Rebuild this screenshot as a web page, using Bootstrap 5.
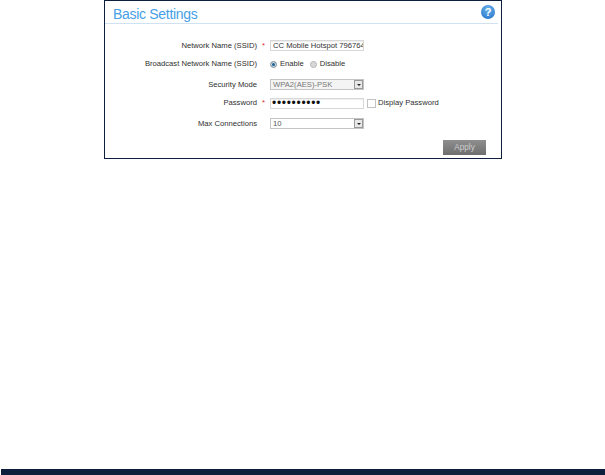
<!DOCTYPE html>
<html lang="en">
<head>
<meta charset="utf-8">
<title>Basic Settings</title>
<link rel="stylesheet" href="https://cdn.jsdelivr.net/npm/bootstrap@5.3.0/dist/css/bootstrap.min.css">
<style>
html,body{height:100%}
body{font-family:"Liberation Sans",Arial,sans-serif;font-size:7.65px;color:#2f2f2f;background:#fff;overflow:hidden}
.screen{height:475px}
.panel{margin-left:104px;width:398px;height:159px;border:1px solid #0d1f3c;border-radius:0;padding:0 3px 0 0;position:relative}
.panel-head{height:23px;padding-left:8px;border-bottom:1px solid #cfe2f1;padding-right:4px}
.panel-title{font-size:14px;letter-spacing:-.3px;line-height:1;color:#45a0e6;font-weight:400;margin:0;padding-top:6px}
.help-dot{width:14px;height:14px;border-radius:50%;background:radial-gradient(circle at 50% 30%,#6db3ee,#1f6fc4);color:#fff;font-size:11px;font-weight:700;line-height:14px;text-align:center;margin-top:4px;margin-right:-1px}
.form-grid{padding-top:11px}
.form-line{height:18px;display:flex;align-items:center}
.line-gap{height:21px}
.line-short{height:18px;padding-bottom:2px}
.line-up{padding-bottom:2px}
.line-tall{height:20px;padding-top:1px}
.field-label{width:152px;text-align:right;flex:none}
.req{display:inline-block;width:13px;color:#d9232e;text-align:left;padding-left:5px;flex:none}
.field-box{width:94px;height:11px;border:1px solid #d8d8d8;background:#fff;padding:0 0 0 2px;font:7.65px/9px "Liberation Sans",Arial,sans-serif;color:#333;flex:none;outline:0;box-shadow:inset 0 1px 1px #eee}
.drop-box{position:relative;display:flex;align-items:center;height:11px;width:94px;border:1px solid #c4c4c4;padding-left:2px;flex:none;background:#fff;color:#555}
.drop-grey{background:#f4f4f4;color:#777}
.drop-arrow{position:absolute;right:0;top:0;width:9px;height:9px;background:#e8e8e8;border:1px solid #999;display:flex;align-items:center;justify-content:center}
.drop-arrow::after{content:"";border-left:2px solid transparent;border-right:2px solid transparent;border-top:2px solid #222}
.radio-dot{width:7px;height:7px;border-radius:50%;background:#d8d8d8;border:1px solid #b5b5b5;flex:none;margin-right:3px}
.radio-on{background:#1f5f95;border-color:#a5a5a5;box-shadow:inset 0 0 0 1px #cfdfe9}
.tick-box{width:9px;height:9px;border:1px solid #c2c2c2;background:#fff;margin:0 2px 0 3px;flex:none}
.dots{letter-spacing:.7px;font-size:12px;line-height:9px;color:#111;padding-left:1px}
.apply-btn{position:absolute;right:15px;bottom:3px;width:43px;height:15px;border:0;border-radius:0;background:linear-gradient(#8f8f8f,#6e6e6e);color:#cfcfcf;font-size:8.2px;padding:0;line-height:15px}
.foot-strip{position:absolute;left:1px;right:0;bottom:0;height:6px;background:#0d1f3c}
.enable-txt{margin-right:6px}
</style>
</head>
<body>
<div class="screen position-relative">
  <section class="panel">
    <div class="panel-head d-flex justify-content-between align-items-start">
      <h1 class="panel-title">Basic Settings</h1>
      <div class="help-dot">?</div>
    </div>
    <form class="form-grid">
      <div class="form-line line-gap">
        <span class="field-label">Network Name (SSID)</span><span class="req">*</span>
        <input class="field-box" value="CC Mobile Hotspot 796764" readonly>
      </div>
      <div class="form-line line-up">
        <span class="field-label">Broadcast Network Name (SSID)</span><span class="req"></span>
        <span class="radio-dot radio-on"></span><span class="enable-txt">Enable</span>
        <span class="radio-dot"></span><span>Disable</span>
      </div>
      <div class="form-line line-gap">
        <span class="field-label">Security Mode</span><span class="req"></span>
        <div class="drop-box drop-grey">WPA2(AES)-PSK<span class="drop-arrow"></span></div>
      </div>
      <div class="form-line line-short">
        <span class="field-label">Password</span><span class="req">*</span>
        <div class="field-box dots d-flex align-items-center">••••••••••</div>
        <span class="tick-box"></span><span>Display Password</span>
      </div>
      <div class="form-line line-tall">
        <span class="field-label">Max Connections</span><span class="req"></span>
        <div class="drop-box">10<span class="drop-arrow"></span></div>
      </div>
    </form>
    <button type="button" class="apply-btn btn">Apply</button>
  </section>
  <div class="foot-strip"></div>
</div>
</body>
</html>
